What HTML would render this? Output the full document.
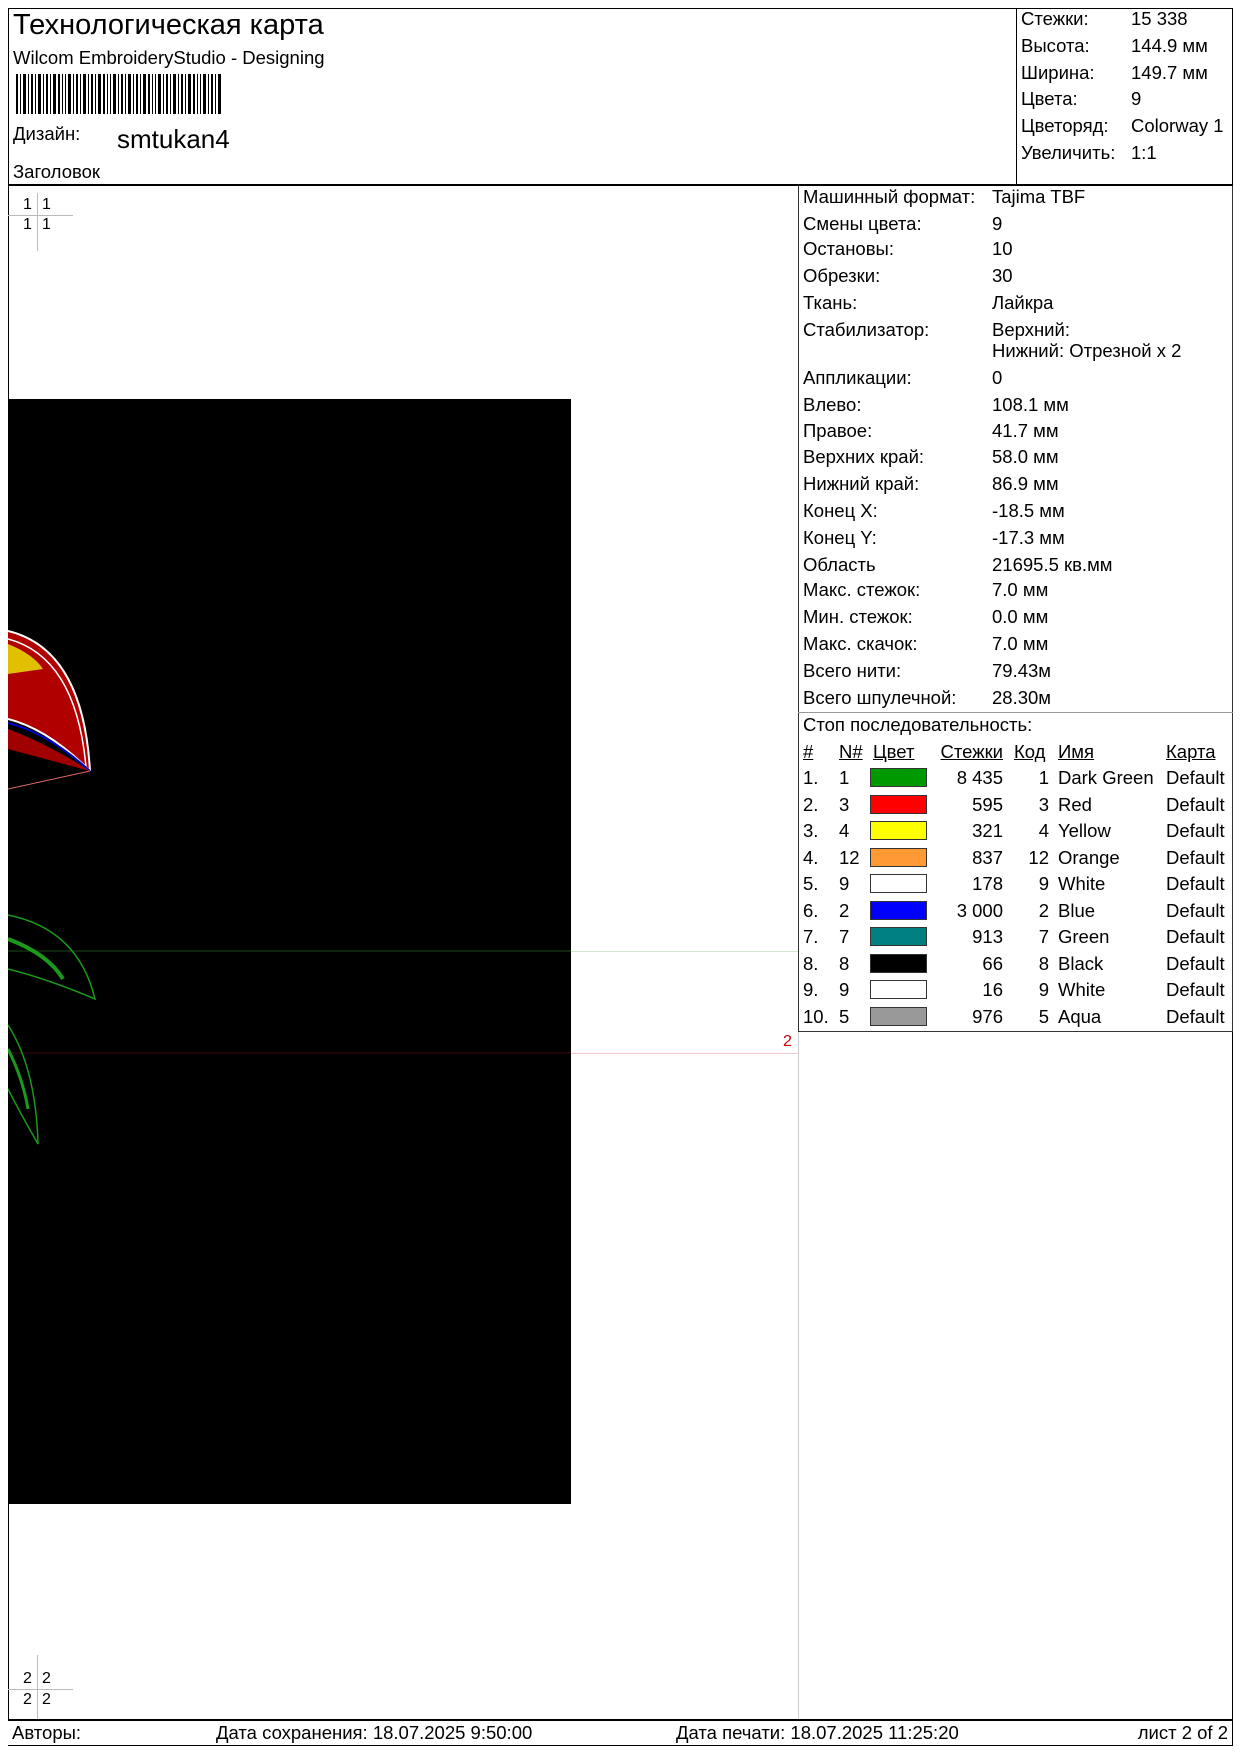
<!DOCTYPE html>
<html><head><meta charset="utf-8"><style>
*{margin:0;padding:0;box-sizing:border-box}
body{width:1241px;height:1755px;background:#fff;position:relative;font-family:"Liberation Sans",Arial,sans-serif;color:#000;overflow:hidden}
.a{position:absolute;white-space:nowrap;line-height:1}
.f18{font-size:18.5px}
.box{position:absolute;border:1px solid #000}
.hl{position:absolute;height:1px}
.vl{position:absolute;width:1px}
.sw{position:absolute;width:57px;height:19px;border:1px solid #333}
.r{text-align:right}
.L{left:803px}.V{left:992px}
u{text-decoration:underline}
</style></head><body>
<div class="box" style="left:8px;top:8px;width:1225px;height:178px;border-width:1px 1px 2px 1px"></div>
<div class="vl" style="left:1016px;top:8px;height:178px;background:#000"></div>
<div class="a" style="left:13px;top:11px;font-size:29px">Технологическая карта</div>
<div class="a f18" style="left:13px;top:49px">Wilcom EmbroideryStudio - Designing</div>
<svg class="a" style="left:16px;top:74px" width="206" height="40">
<g fill="#000">
<rect x="0" y="0" width="2" height="40"/><rect x="4" y="0" width="1" height="40"/><rect x="7" y="0" width="3" height="40"/><rect x="12" y="0" width="1" height="40"/><rect x="15" y="0" width="2" height="40"/><rect x="19" y="0" width="1" height="40"/><rect x="22" y="0" width="3" height="40"/><rect x="27" y="0" width="1" height="40"/><rect x="30" y="0" width="2" height="40"/><rect x="34" y="0" width="1" height="40"/><rect x="37" y="0" width="3" height="40"/><rect x="42" y="0" width="2" height="40"/><rect x="46" y="0" width="1" height="40"/><rect x="49" y="0" width="1" height="40"/><rect x="52" y="0" width="3" height="40"/><rect x="57" y="0" width="1" height="40"/><rect x="60" y="0" width="2" height="40"/><rect x="64" y="0" width="1" height="40"/><rect x="67" y="0" width="3" height="40"/><rect x="72" y="0" width="1" height="40"/><rect x="75" y="0" width="2" height="40"/><rect x="79" y="0" width="1" height="40"/><rect x="82" y="0" width="3" height="40"/><rect x="87" y="0" width="2" height="40"/><rect x="91" y="0" width="1" height="40"/><rect x="94" y="0" width="1" height="40"/><rect x="97" y="0" width="3" height="40"/><rect x="102" y="0" width="1" height="40"/><rect x="105" y="0" width="2" height="40"/><rect x="109" y="0" width="1" height="40"/><rect x="112" y="0" width="3" height="40"/><rect x="117" y="0" width="1" height="40"/><rect x="120" y="0" width="2" height="40"/><rect x="124" y="0" width="1" height="40"/><rect x="127" y="0" width="3" height="40"/><rect x="132" y="0" width="2" height="40"/><rect x="136" y="0" width="1" height="40"/><rect x="139" y="0" width="1" height="40"/><rect x="142" y="0" width="3" height="40"/><rect x="147" y="0" width="1" height="40"/><rect x="150" y="0" width="2" height="40"/><rect x="154" y="0" width="1" height="40"/><rect x="157" y="0" width="3" height="40"/><rect x="162" y="0" width="1" height="40"/><rect x="165" y="0" width="2" height="40"/><rect x="169" y="0" width="1" height="40"/><rect x="172" y="0" width="3" height="40"/><rect x="177" y="0" width="2" height="40"/><rect x="181" y="0" width="1" height="40"/><rect x="184" y="0" width="1" height="40"/><rect x="187" y="0" width="3" height="40"/><rect x="192" y="0" width="1" height="40"/><rect x="195" y="0" width="2" height="40"/><rect x="199" y="0" width="1" height="40"/><rect x="202" y="0" width="3" height="40"/>
</g></svg>
<div class="a f18" style="left:13px;top:125px">Дизайн:</div>
<div class="a" style="left:117px;top:126px;font-size:26px">smtukan4</div>
<div class="a f18" style="left:13px;top:163px">Заголовок</div>

<div class="a f18" style="left:1021px;top:10px">Стежки:</div><div class="a f18" style="left:1131px;top:10px">15 338</div>
<div class="a f18" style="left:1021px;top:37px">Высота:</div><div class="a f18" style="left:1131px;top:37px">144.9 мм</div>
<div class="a f18" style="left:1021px;top:64px">Ширина:</div><div class="a f18" style="left:1131px;top:64px">149.7 мм</div>
<div class="a f18" style="left:1021px;top:90px">Цвета:</div><div class="a f18" style="left:1131px;top:90px">9</div>
<div class="a f18" style="left:1021px;top:117px">Цветоряд:</div><div class="a f18" style="left:1131px;top:117px">Colorway 1</div>
<div class="a f18" style="left:1021px;top:144px">Увеличить:</div><div class="a f18" style="left:1131px;top:144px">1:1</div>

<div class="box" style="left:798px;top:186px;width:435px;height:846px;border-color:#333;border-top:none"></div>
<div class="hl" style="left:798px;top:712px;width:435px;background:#999"></div>
<div class="vl" style="left:798px;top:1032px;height:688px;background:#ccc"></div>
<div class="vl" style="left:1232px;top:1032px;height:688px;background:#000"></div>

<div class="a f18 L" style="top:188px">Машинный формат:</div><div class="a f18 V" style="top:188px">Tajima TBF</div>
<div class="a f18 L" style="top:215px">Смены цвета:</div><div class="a f18 V" style="top:215px">9</div>
<div class="a f18 L" style="top:240px">Остановы:</div><div class="a f18 V" style="top:240px">10</div>
<div class="a f18 L" style="top:267px">Обрезки:</div><div class="a f18 V" style="top:267px">30</div>
<div class="a f18 L" style="top:294px">Ткань:</div><div class="a f18 V" style="top:294px">Лайкра</div>
<div class="a f18 L" style="top:321px">Стабилизатор:</div><div class="a f18 V" style="top:321px">Верхний:</div>
<div class="a f18 V" style="top:342px">Нижний: Отрезной x 2</div>
<div class="a f18 L" style="top:369px">Аппликации:</div><div class="a f18 V" style="top:369px">0</div>
<div class="a f18 L" style="top:396px">Влево:</div><div class="a f18 V" style="top:396px">108.1 мм</div>
<div class="a f18 L" style="top:422px">Правое:</div><div class="a f18 V" style="top:422px">41.7 мм</div>
<div class="a f18 L" style="top:448px">Верхних край:</div><div class="a f18 V" style="top:448px">58.0 мм</div>
<div class="a f18 L" style="top:475px">Нижний край:</div><div class="a f18 V" style="top:475px">86.9 мм</div>
<div class="a f18 L" style="top:502px">Конец X:</div><div class="a f18 V" style="top:502px">-18.5 мм</div>
<div class="a f18 L" style="top:529px">Конец Y:</div><div class="a f18 V" style="top:529px">-17.3 мм</div>
<div class="a f18 L" style="top:556px">Область</div><div class="a f18 V" style="top:556px">21695.5 кв.мм</div>
<div class="a f18 L" style="top:581px">Макс. стежок:</div><div class="a f18 V" style="top:581px">7.0 мм</div>
<div class="a f18 L" style="top:608px">Мин. стежок:</div><div class="a f18 V" style="top:608px">0.0 мм</div>
<div class="a f18 L" style="top:635px">Макс. скачок:</div><div class="a f18 V" style="top:635px">7.0 мм</div>
<div class="a f18 L" style="top:662px">Всего нити:</div><div class="a f18 V" style="top:662px">79.43м</div>
<div class="a f18 L" style="top:689px">Всего шпулечной:</div><div class="a f18 V" style="top:689px">28.30м</div>

<div class="a f18" style="left:803px;top:716px">Стоп последовательность:</div>
<div class="a f18" style="left:803px;top:743px"><u>#</u></div>
<div class="a f18" style="left:839px;top:743px"><u>N#</u></div>
<div class="a f18" style="left:873px;top:743px"><u>Цвет</u></div>
<div class="a f18 r" style="left:903px;width:100px;top:743px"><u>Стежки</u></div>
<div class="a f18" style="left:1014px;top:743px"><u>Код</u></div>
<div class="a f18" style="left:1058px;top:743px"><u>Имя</u></div>
<div class="a f18" style="left:1166px;top:743px"><u>Карта</u></div>

<div style="position:absolute;left:0;top:769px">
<div class="a f18" style="left:803px;top:0">1.</div><div class="a f18" style="left:839px;top:0">1</div><div class="sw" style="left:870px;top:-1px;background:#009900"></div><div class="a f18 r" style="left:903px;width:100px;top:0">8 435</div><div class="a f18 r" style="left:1000px;width:49px;top:0">1</div><div class="a f18" style="left:1058px;top:0">Dark Green</div><div class="a f18" style="left:1166px;top:0">Default</div>
</div>
<div style="position:absolute;left:0;top:796px">
<div class="a f18" style="left:803px;top:0">2.</div><div class="a f18" style="left:839px;top:0">3</div><div class="sw" style="left:870px;top:-1px;background:#ff0000"></div><div class="a f18 r" style="left:903px;width:100px;top:0">595</div><div class="a f18 r" style="left:1000px;width:49px;top:0">3</div><div class="a f18" style="left:1058px;top:0">Red</div><div class="a f18" style="left:1166px;top:0">Default</div>
</div>
<div style="position:absolute;left:0;top:822px">
<div class="a f18" style="left:803px;top:0">3.</div><div class="a f18" style="left:839px;top:0">4</div><div class="sw" style="left:870px;top:-1px;background:#ffff00"></div><div class="a f18 r" style="left:903px;width:100px;top:0">321</div><div class="a f18 r" style="left:1000px;width:49px;top:0">4</div><div class="a f18" style="left:1058px;top:0">Yellow</div><div class="a f18" style="left:1166px;top:0">Default</div>
</div>
<div style="position:absolute;left:0;top:849px">
<div class="a f18" style="left:803px;top:0">4.</div><div class="a f18" style="left:839px;top:0">12</div><div class="sw" style="left:870px;top:-1px;background:#ff9933"></div><div class="a f18 r" style="left:903px;width:100px;top:0">837</div><div class="a f18 r" style="left:1000px;width:49px;top:0">12</div><div class="a f18" style="left:1058px;top:0">Orange</div><div class="a f18" style="left:1166px;top:0">Default</div>
</div>
<div style="position:absolute;left:0;top:875px">
<div class="a f18" style="left:803px;top:0">5.</div><div class="a f18" style="left:839px;top:0">9</div><div class="sw" style="left:870px;top:-1px;background:#fff"></div><div class="a f18 r" style="left:903px;width:100px;top:0">178</div><div class="a f18 r" style="left:1000px;width:49px;top:0">9</div><div class="a f18" style="left:1058px;top:0">White</div><div class="a f18" style="left:1166px;top:0">Default</div>
</div>
<div style="position:absolute;left:0;top:902px">
<div class="a f18" style="left:803px;top:0">6.</div><div class="a f18" style="left:839px;top:0">2</div><div class="sw" style="left:870px;top:-1px;background:#0000ff"></div><div class="a f18 r" style="left:903px;width:100px;top:0">3 000</div><div class="a f18 r" style="left:1000px;width:49px;top:0">2</div><div class="a f18" style="left:1058px;top:0">Blue</div><div class="a f18" style="left:1166px;top:0">Default</div>
</div>
<div style="position:absolute;left:0;top:928px">
<div class="a f18" style="left:803px;top:0">7.</div><div class="a f18" style="left:839px;top:0">7</div><div class="sw" style="left:870px;top:-1px;background:#008080"></div><div class="a f18 r" style="left:903px;width:100px;top:0">913</div><div class="a f18 r" style="left:1000px;width:49px;top:0">7</div><div class="a f18" style="left:1058px;top:0">Green</div><div class="a f18" style="left:1166px;top:0">Default</div>
</div>
<div style="position:absolute;left:0;top:955px">
<div class="a f18" style="left:803px;top:0">8.</div><div class="a f18" style="left:839px;top:0">8</div><div class="sw" style="left:870px;top:-1px;background:#000"></div><div class="a f18 r" style="left:903px;width:100px;top:0">66</div><div class="a f18 r" style="left:1000px;width:49px;top:0">8</div><div class="a f18" style="left:1058px;top:0">Black</div><div class="a f18" style="left:1166px;top:0">Default</div>
</div>
<div style="position:absolute;left:0;top:981px">
<div class="a f18" style="left:803px;top:0">9.</div><div class="a f18" style="left:839px;top:0">9</div><div class="sw" style="left:870px;top:-1px;background:#fff"></div><div class="a f18 r" style="left:903px;width:100px;top:0">16</div><div class="a f18 r" style="left:1000px;width:49px;top:0">9</div><div class="a f18" style="left:1058px;top:0">White</div><div class="a f18" style="left:1166px;top:0">Default</div>
</div>
<div style="position:absolute;left:0;top:1008px">
<div class="a f18" style="left:803px;top:0">10.</div><div class="a f18" style="left:839px;top:0">5</div><div class="sw" style="left:870px;top:-1px;background:#999"></div><div class="a f18 r" style="left:903px;width:100px;top:0">976</div><div class="a f18 r" style="left:1000px;width:49px;top:0">5</div><div class="a f18" style="left:1058px;top:0">Aqua</div><div class="a f18" style="left:1166px;top:0">Default</div>
</div>

<div class="vl" style="left:8px;top:186px;height:1534px;background:#000"></div>

<div class="vl" style="left:37px;top:193px;height:58px;background:#bbb"></div>
<div class="hl" style="left:8px;top:215px;width:65px;background:#bbb"></div>
<div class="a" style="left:23px;top:197px;font-size:16px">1</div><div class="a" style="left:42px;top:197px;font-size:16px">1</div>
<div class="a" style="left:23px;top:217px;font-size:16px">1</div><div class="a" style="left:42px;top:217px;font-size:16px">1</div>
<div class="vl" style="left:37px;top:1655px;height:65px;background:#bbb"></div>
<div class="hl" style="left:8px;top:1689px;width:65px;background:#bbb"></div>
<div class="a" style="left:23px;top:1671px;font-size:16px">2</div><div class="a" style="left:42px;top:1671px;font-size:16px">2</div>
<div class="a" style="left:23px;top:1692px;font-size:16px">2</div><div class="a" style="left:42px;top:1692px;font-size:16px">2</div>

<svg class="a" style="left:8px;top:399px" width="563" height="1105" viewBox="0 0 563 1105">
<rect width="563" height="1105" fill="#000"/>
<line x1="0" y1="552" x2="563" y2="552" stroke="#1a4a1a" stroke-width="1"/>
<line x1="0" y1="654" x2="563" y2="654" stroke="#3a0a0a" stroke-width="1"/>
<path d="M0 232 Q75 250 82 372 Q40 330 0 320Z" fill="#b00000"/>
<path d="M0 232 Q75 250 82 372" fill="none" stroke="#fff" stroke-width="2"/>
<path d="M0 240 Q68 258 78 368" fill="none" stroke="#fff" stroke-width="1.5"/>
<path d="M0 320 Q40 330 82 372" fill="none" stroke="#fff" stroke-width="2"/>
<path d="M0 324 Q40 334 82 372" fill="none" stroke="#00c" stroke-width="2"/>
<path d="M0 330 Q40 345 82 372 L0 350Z" fill="#a00000"/>
<path d="M0 245 Q25 255 35 270 L0 275Z" fill="#e0c000"/>
<line x1="82" y1="372" x2="0" y2="390" stroke="#d66" stroke-width="1"/>
<path d="M0 516 Q70 530 87 600 Q40 580 0 570" fill="none" stroke="#1a9a1a" stroke-width="1.5"/>
<path d="M0 540 Q40 555 55 580" fill="none" stroke="#1a9a1a" stroke-width="4"/>
<path d="M0 626 Q28 670 30 745 Q10 710 0 690" fill="none" stroke="#1a9a1a" stroke-width="1.5"/>
<path d="M0 650 Q15 680 20 710" fill="none" stroke="#1a9a1a" stroke-width="3"/>
</svg>
<div class="hl" style="left:571px;top:951px;width:227px;background:#cfe8cf"></div>
<div class="hl" style="left:571px;top:1053px;width:227px;background:#f3c8cc"></div>
<div class="a" style="left:783px;top:1034px;font-size:16px;color:#c00">2</div>

<div class="hl" style="left:8px;top:1719px;width:1225px;height:2px;background:#000"></div>
<div class="hl" style="left:8px;top:1745px;width:1225px;background:#000"></div>
<div class="vl" style="left:1232px;top:1719px;height:27px;background:#000"></div>
<div class="a f18" style="left:12px;top:1724px">Авторы:</div>
<div class="a f18" style="left:216px;top:1724px">Дата сохранения: 18.07.2025 9:50:00</div>
<div class="a f18" style="left:676px;top:1724px">Дата печати: 18.07.2025 11:25:20</div>
<div class="a f18" style="right:13px;top:1724px">лист 2 of 2</div>
</body></html>
